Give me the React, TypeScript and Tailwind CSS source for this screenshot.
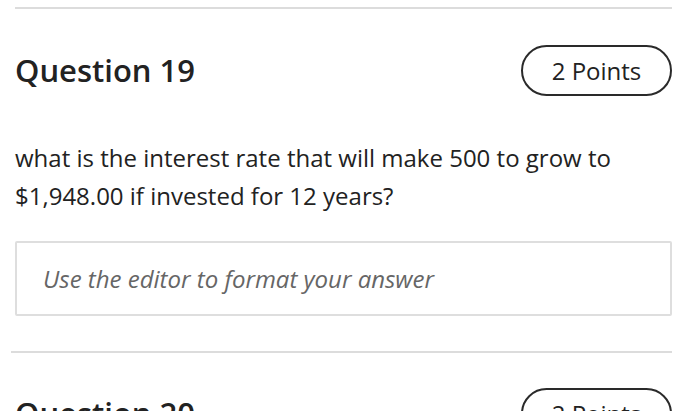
import React from 'react';

function PointsPill({ label }: { label: string }) {
  return (
    <div className="flex h-[51px] w-[151px] items-center justify-center rounded-full border-2 border-[#2a2a2a] text-[24px] text-[#222]">
      {label}
    </div>
  );
}

function QuestionHeader({ title, points }: { title: string; points: string }) {
  return (
    <div className="flex items-center justify-between">
      <h2 className="text-[31px] font-semibold text-[#222]">{title}</h2>
      <PointsPill label={points} />
    </div>
  );
}

export default function App() {
  return (
    <div className="h-[411px] w-[700px] overflow-hidden bg-white pl-[15px] pr-[28px] font-['Open_Sans',sans-serif]">
      <div className="mt-[7px] h-[2px] bg-[#dcdcdc]" />

      <div className="mt-[36px]">
        <QuestionHeader title="Question 19" points="2 Points" />
      </div>

      <p className="mt-[43px] text-[24px] leading-[38px] text-[#222]">
        what is the interest rate that will make 500 to grow to
        <br />
        $1,948.00 if invested for 12 years?
      </p>

      <div className="mt-[26px] flex h-[75px] items-center rounded-[2px] border-2 border-[#dedede] px-[26px]">
        <span className="text-[24px] italic text-[#666]">Use the editor to format your answer</span>
      </div>

      <div className="-ml-[4px] mt-[35px] h-[2px] bg-[#dcdcdc]" />

      <div className="mt-[35px]">
        <QuestionHeader title="Question 20" points="2 Points" />
      </div>
    </div>
  );
}
